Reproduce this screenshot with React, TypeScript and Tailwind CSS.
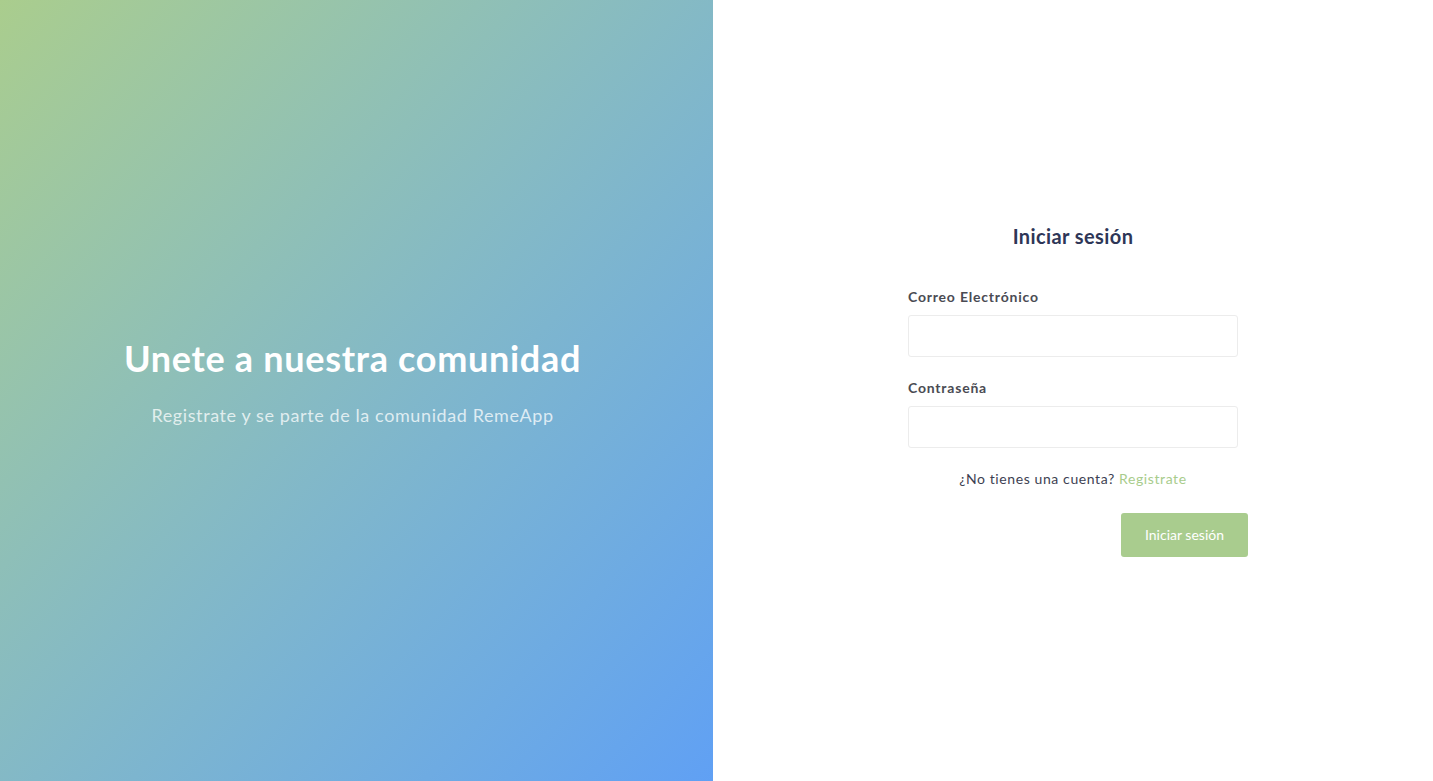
const App = () => {
  return (
    <div className="flex h-[781px] w-full font-['Lato',sans-serif]">
      <section className="flex w-[713px] flex-col items-center justify-center bg-gradient-to-br from-[#aacd8d] to-[#60a0f4] pb-[19px] pr-[8px]">
        <h1 className="text-[36px] font-bold leading-[44px] tracking-[0.7px] text-white">Unete a nuestra comunidad</h1>
        <p className="mt-[23px] text-[18px] leading-[24px] tracking-[0.6px] text-white/75">
          Registrate y se parte de la comunidad RemeApp
        </p>
      </section>

      <section className="flex flex-1 items-center justify-center">
        <form className="-mt-[3px] flex w-[330px] flex-col" onSubmit={(e) => e.preventDefault()}>
          <h2 className="text-center text-[20px] font-bold leading-[28px] tracking-[0.4px] text-[#2e3657]">
            Iniciar sesión
          </h2>

          <label className="mt-[37px] text-[14px] font-bold leading-[20px] tracking-[0.8px] text-[#4a4b53]">
            Correo Electrónico
          </label>
          <input
            type="email"
            className="mt-[8px] h-[42px] rounded-[3px] border border-[#ececec] px-3 text-[14px] outline-none"
          />

          <label className="mt-[21px] text-[14px] font-bold leading-[20px] tracking-[0.8px] text-[#4a4b53]">
            Contraseña
          </label>
          <input
            type="password"
            className="mt-[8px] h-[42px] rounded-[3px] border border-[#ececec] px-3 text-[14px] outline-none"
          />

          <p className="mt-[21px] text-center text-[14px] leading-[20px] tracking-[0.6px] text-[#3d3f52]">
            ¿No tienes una cuenta? <a href="#" className="text-[#a8cc8c]">Registrate</a>
          </p>

          <div className="-mr-[10px] mt-[24px] flex justify-end">
            <button
              type="submit"
              className="h-[44px] w-[127px] rounded-[3px] bg-[#a9cc8e] text-[14px] text-white"
            >
              Iniciar sesión
            </button>
          </div>
        </form>
      </section>
    </div>
  );
};

export default App;
